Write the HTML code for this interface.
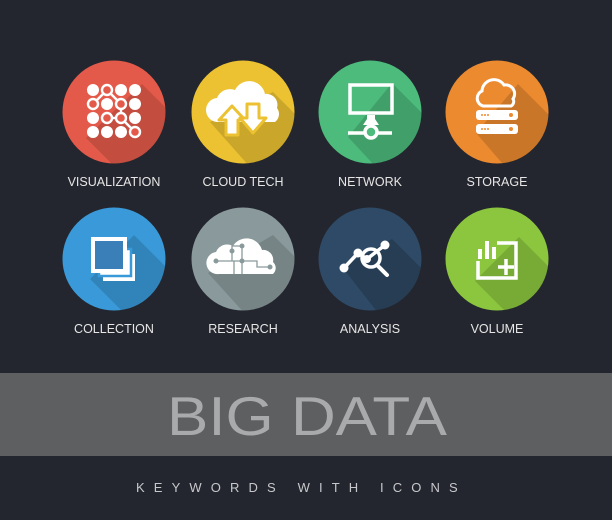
<!DOCTYPE html>
<html><head><meta charset="utf-8"><style>
html,body{margin:0;padding:0;background:#23262e;}
svg{display:block}
</style></head><body>
<svg width="612" height="520" viewBox="0 0 612 520" xmlns="http://www.w3.org/2000/svg" font-family="Liberation Sans, sans-serif">
<defs><clipPath id="c"><circle cx="0" cy="0" r="51.5"/></clipPath></defs>
<rect width="612" height="520" fill="#23262e"/>

<!-- 1 Visualization -->
<g transform="translate(114,112)">
<circle r="51.5" fill="#e45a4a"/>
<polygon clip-path="url(#c)" points="-28,26 28,-28 128,72 72,126" fill="#000" opacity=".14"/>
<g fill="#fff">
<circle cx="-21" cy="-22" r="6"/><circle cx="7" cy="-22" r="6"/><circle cx="21" cy="-22" r="6"/>
<circle cx="-7" cy="-8" r="6"/><circle cx="21" cy="-8" r="6"/>
<circle cx="-21" cy="6" r="6"/><circle cx="21" cy="6" r="6"/>
<circle cx="-21" cy="20" r="6"/><circle cx="-7" cy="20" r="6"/><circle cx="7" cy="20" r="6"/>
</g>
<g fill="none" stroke="#fff" stroke-width="2.4">
<path d="M-7,-22 L-21,-8 M-7,-22 L7,-8 L7,6 L21,20 M-7,6 L7,6"/>
<circle cx="-7" cy="-22" r="5" fill="#e45a4a"/><circle cx="-21" cy="-8" r="5" fill="#e45a4a"/>
<circle cx="7" cy="-8" r="5" fill="#e45a4a"/><circle cx="-7" cy="6" r="5" fill="#e45a4a"/>
<circle cx="7" cy="6" r="5" fill="#e45a4a"/><circle cx="21" cy="20" r="5" fill="#e45a4a"/>
</g>
</g>

<!-- 2 Cloud tech -->
<g transform="translate(243,112)">
<circle r="51.5" fill="#ecc232"/>
<polygon clip-path="url(#c)" points="-33,10 30,-20 130,80 70,126" fill="#000" opacity=".14"/>
<path d="M-24,10 a12,12 0 0 1 -2,-24 a14,14 0 0 1 18,-8 a16,16 0 0 1 30,4 a11,11 0 0 1 12,14 a10,10 0 0 1 -2,14 z" fill="#fff"/>
<path d="M-11,-6 L-24,8 L-17,8 L-17,23 L-5,23 L-5,8 L2,8 z" fill="#fff" stroke="#ecc232" stroke-width="3" stroke-linejoin="round"/>
<path d="M4,-8 L16,-8 L16,6 L23,6 L10,21 L-3,6 L4,6 z" fill="#fff" stroke="#ecc232" stroke-width="3" stroke-linejoin="round"/>
</g>

<!-- 3 Network -->
<g transform="translate(370,112)">
<circle r="51.5" fill="#4cbb7c"/>
<polygon clip-path="url(#c)" points="-22,25 22,-29 122,71 72,126" fill="#000" opacity=".14"/>
<rect x="-20" y="-27" width="42" height="28" fill="none" stroke="#fff" stroke-width="3.5"/>
<path d="M-3,3 L5,3 L5,7 L9,13 L-7,13 L-3,7 z" fill="#fff"/>
<path d="M-22,21 L22,21" stroke="#fff" stroke-width="3.5"/>
<circle cx="1" cy="20" r="6" fill="#4cbb7c" stroke="#fff" stroke-width="3.5"/>
</g>

<!-- 4 Storage -->
<g transform="translate(497,112)">
<circle r="51.5" fill="#ec8a30"/>
<polygon clip-path="url(#c)" points="-21,21 21,-28 121,72 70,126" fill="#000" opacity=".14"/>
<path d="M-14,-6 a8,8 0 0 1 -1,-15 a12,12 0 0 1 22,-6 a9,9 0 0 1 9,14 a5,5 0 0 1 -2,7 z" fill="none" stroke="#fff" stroke-width="3"/>
<rect x="-21" y="-2" width="42" height="10" rx="3" fill="#fff"/>
<rect x="-21" y="12" width="42" height="10" rx="3" fill="#fff"/>
<g fill="#ec8a30"><circle cx="-15" cy="3" r="1"/><circle cx="-12" cy="3" r="1"/><circle cx="-9" cy="3" r="1"/><circle cx="14" cy="3" r="2"/>
<circle cx="-15" cy="17" r="1"/><circle cx="-12" cy="17" r="1"/><circle cx="-9" cy="17" r="1"/><circle cx="14" cy="17" r="2"/></g>
</g>

<!-- 5 Collection -->
<g transform="translate(114,259)">
<circle r="51.5" fill="#3a9ad9"/>
<polygon clip-path="url(#c)" points="-24,20 20,-24 120,76 76,120" fill="#000" opacity=".14"/>
<rect x="-11" y="-5" width="32" height="27" fill="#fff"/>
<rect x="-15" y="-10" width="32" height="27" fill="#fff" stroke="#3a9ad9" stroke-width="2.5"/>
<rect x="-21" y="-20" width="32" height="32" fill="#3a7fb8" stroke="#fff" stroke-width="4" />
</g>

<!-- 6 Research -->
<g transform="translate(243,259)">
<circle r="51.5" fill="#8a9a9c"/>
<polygon clip-path="url(#c)" points="-35,14 30,-24 130,76 70,130" fill="#000" opacity=".14"/>
<path d="M-24,15 a11,11 0 0 1 -3,-22 a12,12 0 0 1 17,-6 a16,16 0 0 1 29,4 a10,10 0 0 1 11,12 a8,8 0 0 1 0,12 z" fill="#fff"/>
<g stroke="#8a9a9c" stroke-width="1.3" fill="none">
<path d="M-26,2 L14,2 L14,8 L26,8 M-11,-8 L-11,-13 L-1,-13 L-1,15 M-11,-8 L-11,2 M-9,2 L-9,15 M-11,2"/>
</g>
<g fill="#8a9a9c"><circle cx="-27" cy="2" r="2.5"/><circle cx="-11" cy="-8" r="2.5"/><circle cx="-1" cy="-13" r="2.5"/><circle cx="-1" cy="2" r="2.5"/><circle cx="27" cy="8" r="2.5"/></g>
</g>

<!-- 7 Analysis -->
<g transform="translate(370,259)">
<circle r="51.5" fill="#2e4a66"/>
<polygon clip-path="url(#c)" points="-28,8 22,-20 122,80 60,120" fill="#000" opacity=".17"/>
<path d="M-26,9 L-12,-6 L-3,0 L15,-14" stroke="#fff" stroke-width="3.5" fill="none"/>
<circle cx="-26" cy="9" r="4.5" fill="#fff"/><circle cx="-12" cy="-6" r="4.5" fill="#fff"/><circle cx="15" cy="-14" r="4.5" fill="#fff"/>
<circle cx="1" cy="-1" r="9" fill="none" stroke="#fff" stroke-width="3.5"/>
<circle cx="-3" cy="0" r="4" fill="#fff"/>
<path d="M8,7 L17,16" stroke="#fff" stroke-width="4" stroke-linecap="round"/>
</g>

<!-- 8 Volume -->
<g transform="translate(497,259)">
<circle r="51.5" fill="#8cc63f"/>
<polygon clip-path="url(#c)" points="-22,22 22,-22 122,78 78,122" fill="#000" opacity=".14"/>
<path d="M0,-16 L19,-16 L19,19 L-19,19 L-19,2" fill="none" stroke="#fff" stroke-width="3.5"/>
<rect x="-19" y="-10" width="4" height="10" fill="#fff"/>
<rect x="-12" y="-18" width="4" height="18" fill="#fff"/>
<rect x="-5" y="-12" width="4" height="12" fill="#fff"/>
<path d="M9,0 L9,16 M1,8 L17,8" stroke="#fff" stroke-width="3.5"/>
</g>

<g fill="#e6e6e6" font-size="12.5" text-anchor="middle">
<text x="114" y="186">VISUALIZATION</text>
<text x="243" y="186">CLOUD TECH</text>
<text x="370" y="186">NETWORK</text>
<text x="497" y="186">STORAGE</text>
<text x="114" y="333">COLLECTION</text>
<text x="243" y="333">RESEARCH</text>
<text x="370" y="333">ANALYSIS</text>
<text x="497" y="333">VOLUME</text>
</g>

<rect x="0" y="373" width="612" height="83" fill="#5e5f61"/>
<text x="307" y="435" text-anchor="middle" font-size="55" fill="#a9aaac" textLength="280" lengthAdjust="spacingAndGlyphs">BIG DATA</text>
<text x="300" y="492" text-anchor="middle" font-size="13" fill="#c8c8cc" letter-spacing="6.3" textLength="328">KEYWORDS WITH ICONS</text>
</svg>
</body></html>
